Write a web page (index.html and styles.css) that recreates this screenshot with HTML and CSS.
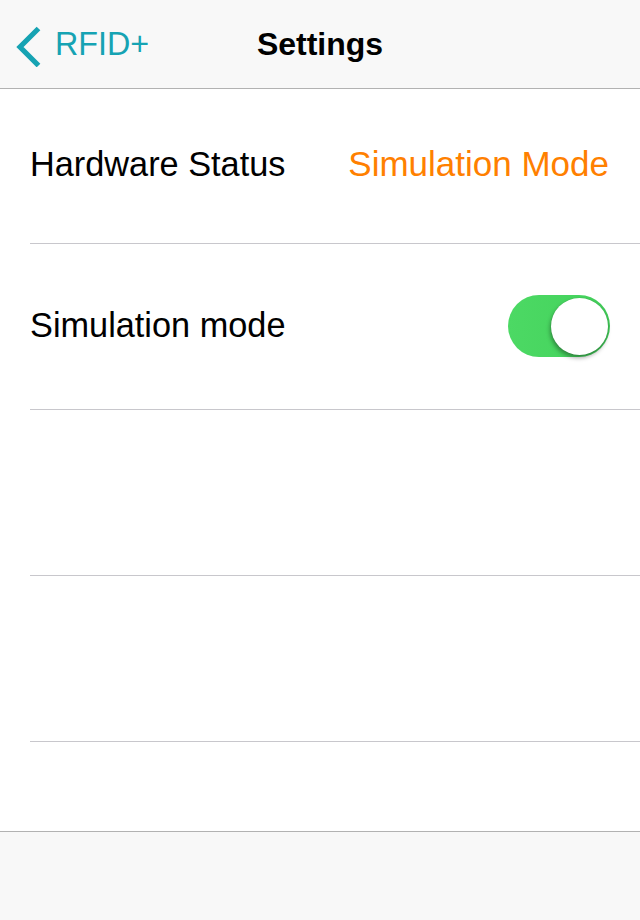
FILE: index.html
```html
<!DOCTYPE html>
<html>
<head>
<meta charset="utf-8">
<link rel="stylesheet" href="styles.css">
</head>
<body>
<div class="screen">
  <header class="nav">
    <div class="back">
      <svg class="chev" width="30" height="44" viewBox="0 0 30 44"><path d="M23.5 5.5 L5 24 L23.5 42.5" fill="none" stroke="#16a3b3" stroke-width="5.2" stroke-linejoin="miter"/></svg>
      <span class="back-label">RFID+</span>
    </div>
    <div class="title">Settings</div>
  </header>
  <main class="list">
    <div class="row row-first">
      <div class="row-inner">
        <span class="label">Hardware Status</span>
        <span class="value">Simulation Mode</span>
      </div>
    </div>
    <div class="row">
      <div class="row-inner">
        <span class="label">Simulation mode</span>
        <span class="switch"><span class="knob"></span></span>
      </div>
    </div>
    <div class="row"><div class="row-inner"></div></div>
    <div class="row"><div class="row-inner"></div></div>
  </main>
  <footer class="toolbar"></footer>
</div>
</body>
</html>
```
FILE: styles.css
```css
html, body {
  margin: 0;
  padding: 0;
  background: #ffffff;
}
body {
  font-family: "Liberation Sans", Arial, sans-serif;
}
.screen {
  width: 640px;
  height: 920px;
  display: flex;
  flex-direction: column;
  overflow: hidden;
}
.nav {
  height: 88px;
  flex: 0 0 88px;
  background: #f8f8f8;
  border-bottom: 1px solid #b2b2b2;
  position: relative;
  display: flex;
  align-items: center;
}
.back {
  display: flex;
  align-items: center;
  padding-left: 15px;
  height: 88px;
}
.chev {
  display: block;
  margin-top: 1px;
}
.back-label {
  font-size: 32.3px;
  color: #16a3b3;
  margin-left: 10px;
  line-height: 40px;
}
.title {
  position: absolute;
  left: 0;
  right: 0;
  top: 0;
  height: 88px;
  line-height: 88px;
  text-align: center;
  font-size: 32px;
  font-weight: bold;
  color: #000;
  pointer-events: none;
}
.list {
  flex: 1 1 auto;
  display: flex;
  flex-direction: column;
  background: #fff;
}
.row {
  padding-left: 30px;
}
.row-inner {
  border-bottom: 1px solid #c8c7cc;
  display: flex;
  align-items: center;
  justify-content: space-between;
  padding-right: 30px;
  padding-bottom: 4px;
  box-sizing: border-box;
  height: 166px;
}
.row-first .row-inner {
  height: 155px;
  padding-bottom: 4px;
}
.label {
  font-size: 34.3px;
  line-height: 40px;
  color: #000;
}
.value {
  font-size: 35px;
  line-height: 40px;
  color: #ff8000;
  margin-right: 1px;
}
.switch {
  position: relative;
  width: 102px;
  height: 62px;
  border-radius: 31px;
  background: linear-gradient(90deg, #4cd964 0%, #46d45e 70%, #3fc756 100%);
  margin-top: 2px;
}
.knob {
  position: absolute;
  right: 2px;
  top: 3px;
  width: 57px;
  height: 57px;
  border-radius: 50%;
  background: #fff;
  box-shadow: -1px 3px 4px rgba(0,0,0,0.35), 0 0 0 0.5px rgba(0,0,0,0.08);
}
.toolbar {
  height: 88px;
  flex: 0 0 88px;
  background: #f8f8f8;
  border-top: 1px solid #b2b2b2;
}
```
